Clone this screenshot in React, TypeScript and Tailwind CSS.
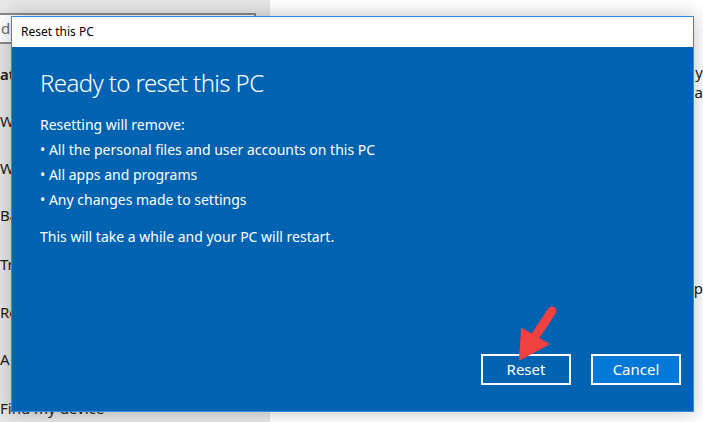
import React from "react";

export default function App() {
  const font = { fontFamily: '"Segoe UI", "Noto Sans", "Open Sans", sans-serif' };
  return (
    <div className="relative w-[703px] h-[422px] overflow-hidden bg-white" style={font}>
      {/* background settings window */}
      <div className="flex h-full">
        <div className="w-[270px] h-full bg-[#e6e6e6] flex flex-col text-[15px] text-[#1a1a1a]">
          <div className="mt-[13px] h-[31px] w-[256px] bg-white border-2 border-[#8a8a8a] border-l-0 flex items-center pl-[1px] text-[#6b6b6b]">d</div>
          <div className="mt-[20px] pl-0 font-semibold leading-[20px]">at</div>
          <div className="mt-[27px] leading-[20px]">W</div>
          <div className="mt-[27px] leading-[20px]">W</div>
          <div className="mt-[27px] leading-[20px]">Ba</div>
          <div className="mt-[29px] leading-[20px]">Tr</div>
          <div className="mt-[28px] leading-[20px]">Re</div>
          <div className="mt-[27px] leading-[20px]">A</div>
          <div className="mt-[29px] leading-[20px]">Find my device</div>
        </div>
        <div className="flex-1 h-full bg-white flex flex-col items-end text-[15px] text-[#1a1a1a]">
          <div className="mt-[62px] leading-[20px]">y</div>
          <div className="leading-[20px]">a</div>
          <div className="mt-[176px] leading-[20px]">up</div>
        </div>
      </div>

      {/* dialog */}
      <div className="absolute left-[11px] top-[16px] w-[683px] h-[396px] border border-[#2b8ae6] flex flex-col shadow-[0_0_18px_rgba(0,0,0,0.25)]">
        <div className="h-[30px] bg-white flex items-center pl-[9px] text-[12px] text-black">Reset this PC</div>
        <div className="flex-1 bg-[#0063b1] text-white flex flex-col pl-[28px] pr-[12px]">
          <div className="mt-[20px] text-[24px] font-light leading-[32px] tracking-[-0.6px]">Ready to reset this PC</div>
          <div className="mt-[13px] text-[14px] leading-[25px]">
            <div>Resetting will remove:</div>
            <div>• All the personal files and user accounts on this PC</div>
            <div>• All apps and programs</div>
            <div>• Any changes made to settings</div>
            <div className="mt-[12px]">This will take a while and your PC will restart.</div>
          </div>
          <div className="mt-auto mb-[26px] flex justify-end gap-[20px]">
            <button className="w-[90px] h-[31px] border-2 border-white bg-[#0063b1] text-white text-[15px]">Reset</button>
            <button className="w-[90px] h-[31px] border-2 border-white bg-[#0078d7] text-white text-[15px]">Cancel</button>
          </div>
        </div>
      </div>

      {/* red arrow */}
      <svg className="absolute left-0 top-0" width="703" height="422" viewBox="0 0 703 422">
        <line x1="552" y1="311" x2="534" y2="338" stroke="#f04040" strokeWidth="9" strokeLinecap="round" />
        <polygon points="520,359 522,329 548,344" fill="#f04040" stroke="#f04040" strokeWidth="2" strokeLinejoin="round" />
      </svg>
    </div>
  );
}
